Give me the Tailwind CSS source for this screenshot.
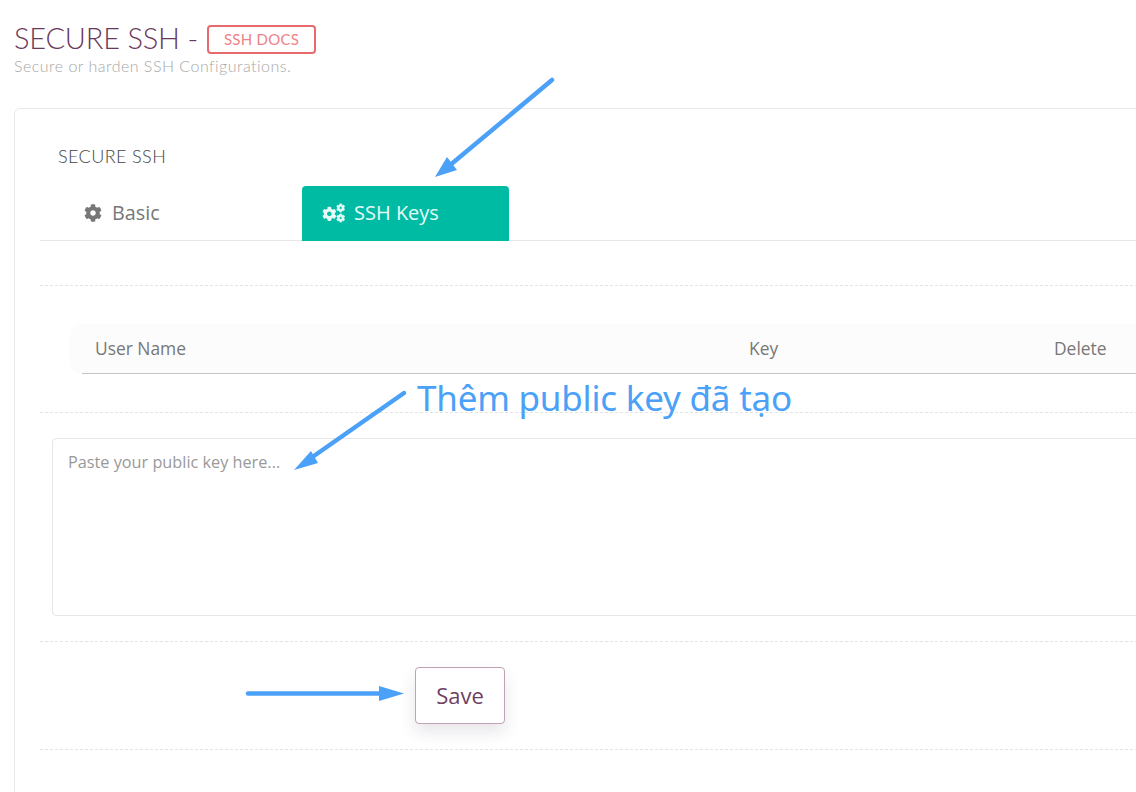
<!DOCTYPE html>
<html>
<head>
<meta charset="utf-8">
<script src="https://cdn.jsdelivr.net/npm/@tailwindcss/browser@4"></script>
</head>
<body class="bg-white">
<div class="relative w-[1136px] h-[792px] overflow-hidden bg-white font-['Open_Sans',sans-serif]">
  <header class="pl-[14px] pt-[25px] h-[108px]">
    <div class="flex items-start h-[29px] gap-[9px]">
      <h1 class="w-[184px] font-['Lato',sans-serif] font-light text-[29px] leading-[25px] text-[#6a3a5c] tracking-[-0.2px] whitespace-nowrap">SECURE SSH -</h1>
      <a class="flex items-center justify-center w-[109px] h-[29px] border-2 border-[#e96a6c] rounded-[4px] font-['Lato',sans-serif] text-[15px] text-[#ee8385] tracking-[0.25px] whitespace-nowrap">SSH DOCS</a>
    </div>
    <p class="font-['Lato',sans-serif] font-light text-[16px] leading-[20px] mt-[2px] text-[#a8a8a8] tracking-[0.48px] whitespace-nowrap">Secure or harden SSH Configurations.</p>
  </header>

  <section class="ml-[14px] w-[1200px] h-[760px] border border-[#e9e9e9] rounded-[6px] pl-[25px]">
    <h2 class="pl-[18px] pt-[36px] h-[77px] font-['Lato',sans-serif] font-light text-[18px] leading-[22px] text-[#444] tracking-[0.4px] whitespace-nowrap">SECURE SSH</h2>

    <div class="flex h-[55px] border-b border-[#e6e6e6]">
      <div class="flex items-center w-[262px] pl-[44px] pb-[1px] gap-[10px] text-[#777] text-[19.8px]">
        <svg class="w-[18px] h-[18px]" viewBox="0 0 512 512" fill="#777"><path d="M487.4 315.7l-42.6-24.6c4.3-23.2 4.3-47 0-70.2l42.6-24.6c4.9-2.8 7.1-8.6 5.5-14-11.1-35.6-30-67.8-54.7-94.6-3.8-4.1-10-5.1-14.8-2.3L380.8 110c-17.9-15.4-38.5-27.3-60.8-35.1V25.8c0-5.6-3.9-10.5-9.4-11.7-36.7-8.2-74.3-7.8-109.2 0-5.5 1.2-9.4 6.1-9.4 11.7V75c-22.2 7.9-42.8 19.8-60.8 35.1L88.7 85.5c-4.9-2.8-11-1.9-14.8 2.3-24.7 26.7-43.6 58.9-54.7 94.6-1.7 5.4.6 11.2 5.5 14L67.3 221c-4.3 23.2-4.3 47 0 70.2l-42.6 24.6c-4.9 2.8-7.1 8.6-5.5 14 11.1 35.6 30 67.8 54.7 94.6 3.8 4.1 10 5.1 14.8 2.3l42.6-24.6c17.9 15.4 38.5 27.3 60.8 35.1v49.2c0 5.6 3.9 10.5 9.4 11.7 36.7 8.2 74.3 7.8 109.2 0 5.5-1.2 9.4-6.1 9.4-11.7v-49.2c22.2-7.9 42.8-19.8 60.8-35.1l42.6 24.6c4.9 2.8 11 1.9 14.8-2.3 24.7-26.7 43.6-58.9 54.7-94.6 1.5-5.5-.7-11.3-5.6-14.1zM256 336c-44.1 0-80-35.9-80-80s35.9-80 80-80 80 35.9 80 80-35.9 80-80 80z"/></svg>
        <span>Basic</span>
      </div>
      <div class="flex items-center w-[207px] h-[55px] pl-[20px] pb-[1px] gap-[9px] rounded-t-[4px] bg-[#00bba4] text-[#e6fbf8] text-[20px]">
        <svg class="w-[23px] h-[20px]" viewBox="0 0 640 512" fill="#e6fbf8">
          <g transform="translate(0 75) scale(.8)"><path d="M487.4 315.7l-42.6-24.6c4.3-23.2 4.3-47 0-70.2l42.6-24.6c4.9-2.8 7.1-8.6 5.5-14-11.1-35.6-30-67.8-54.7-94.6-3.8-4.1-10-5.1-14.8-2.3L380.8 110c-17.9-15.4-38.5-27.3-60.8-35.1V25.8c0-5.6-3.9-10.5-9.4-11.7-36.7-8.2-74.3-7.8-109.2 0-5.5 1.2-9.4 6.1-9.4 11.7V75c-22.2 7.9-42.8 19.8-60.8 35.1L88.7 85.5c-4.9-2.8-11-1.9-14.8 2.3-24.7 26.7-43.6 58.9-54.7 94.6-1.7 5.4.6 11.2 5.5 14L67.3 221c-4.3 23.2-4.3 47 0 70.2l-42.6 24.6c-4.9 2.8-7.1 8.6-5.5 14 11.1 35.6 30 67.8 54.7 94.6 3.8 4.1 10 5.1 14.8 2.3l42.6-24.6c17.9 15.4 38.5 27.3 60.8 35.1v49.2c0 5.6 3.9 10.5 9.4 11.7 36.7 8.2 74.3 7.8 109.2 0 5.5-1.2 9.4-6.1 9.4-11.7v-49.2c22.2-7.9 42.8-19.8 60.8-35.1l42.6 24.6c4.9 2.8 11 1.9 14.8-2.3 24.7-26.7 43.6-58.9 54.7-94.6 1.5-5.5-.7-11.3-5.6-14.1zM256 336c-44.1 0-80-35.9-80-80s35.9-80 80-80 80 35.9 80 80-35.9 80-80 80z"/></g>
          <g transform="translate(400 -5) scale(.47)"><path stroke="#e6fbf8" stroke-width="30" d="M487.4 315.7l-42.6-24.6c4.3-23.2 4.3-47 0-70.2l42.6-24.6c4.9-2.8 7.1-8.6 5.5-14-11.1-35.6-30-67.8-54.7-94.6-3.8-4.1-10-5.1-14.8-2.3L380.8 110c-17.9-15.4-38.5-27.3-60.8-35.1V25.8c0-5.6-3.9-10.5-9.4-11.7-36.7-8.2-74.3-7.8-109.2 0-5.5 1.2-9.4 6.1-9.4 11.7V75c-22.2 7.9-42.8 19.8-60.8 35.1L88.7 85.5c-4.9-2.8-11-1.9-14.8 2.3-24.7 26.7-43.6 58.9-54.7 94.6-1.7 5.4.6 11.2 5.5 14L67.3 221c-4.3 23.2-4.3 47 0 70.2l-42.6 24.6c-4.9 2.8-7.1 8.6-5.5 14 11.1 35.6 30 67.8 54.7 94.6 3.8 4.1 10 5.1 14.8 2.3l42.6-24.6c17.9 15.4 38.5 27.3 60.8 35.1v49.2c0 5.6 3.9 10.5 9.4 11.7 36.7 8.2 74.3 7.8 109.2 0 5.5-1.2 9.4-6.1 9.4-11.7v-49.2c22.2-7.9 42.8-19.8 60.8-35.1l42.6 24.6c4.9 2.8 11 1.9 14.8-2.3 24.7-26.7 43.6-58.9 54.7-94.6 1.5-5.5-.7-11.3-5.6-14.1zM256 336c-44.1 0-80-35.9-80-80s35.9-80 80-80 80 35.9 80 80-35.9 80-80 80z"/></g>
          <g transform="translate(400 275) scale(.47)"><path stroke="#e6fbf8" stroke-width="30" d="M487.4 315.7l-42.6-24.6c4.3-23.2 4.3-47 0-70.2l42.6-24.6c4.9-2.8 7.1-8.6 5.5-14-11.1-35.6-30-67.8-54.7-94.6-3.8-4.1-10-5.1-14.8-2.3L380.8 110c-17.9-15.4-38.5-27.3-60.8-35.1V25.8c0-5.6-3.9-10.5-9.4-11.7-36.7-8.2-74.3-7.8-109.2 0-5.5 1.2-9.4 6.1-9.4 11.7V75c-22.2 7.9-42.8 19.8-60.8 35.1L88.7 85.5c-4.9-2.8-11-1.9-14.8 2.3-24.7 26.7-43.6 58.9-54.7 94.6-1.7 5.4.6 11.2 5.5 14L67.3 221c-4.3 23.2-4.3 47 0 70.2l-42.6 24.6c-4.9 2.8-7.1 8.6-5.5 14 11.1 35.6 30 67.8 54.7 94.6 3.8 4.1 10 5.1 14.8 2.3l42.6-24.6c17.9 15.4 38.5 27.3 60.8 35.1v49.2c0 5.6 3.9 10.5 9.4 11.7 36.7 8.2 74.3 7.8 109.2 0 5.5-1.2 9.4-6.1 9.4-11.7v-49.2c22.2-7.9 42.8-19.8 60.8-35.1l42.6 24.6c4.9 2.8 11 1.9 14.8-2.3 24.7-26.7 43.6-58.9 54.7-94.6 1.5-5.5-.7-11.3-5.6-14.1zM256 336c-44.1 0-80-35.9-80-80s35.9-80 80-80 80 35.9 80 80-35.9 80-80 80z"/></g>
        </svg>
        <span>SSH Keys</span>
      </div>
    </div>

    <div class="h-[45px] border-b border-dashed border-[#e4e4e4]"></div>

    <div class="h-[127px] border-b border-dashed border-[#e4e4e4] pt-[38px]">
      <div class="ml-[30px] w-[1066px] h-[50px] bg-[#fcfcfc] rounded-l-[10px] pl-[12px]">
        <div class="relative h-[50px] border-b border-[#c4c4c4] text-[17.4px] text-[#777]">
          <span class="absolute left-[13px] top-[11px] whitespace-nowrap">User Name</span>
          <span class="absolute left-[667px] top-[11px]">Key</span>
          <span class="absolute left-[972px] top-[11px]">Delete</span>
        </div>
      </div>
    </div>

    <div class="h-[229px] border-b border-dashed border-[#e4e4e4] pt-[25px]">
      <div class="ml-[12px] w-[1160px] h-[178px] border border-[#e6e6e6] rounded-[4px] pl-[15px] pt-[11px] text-[16.25px] leading-[24px] text-[#999]">Paste your public key here...</div>
    </div>

    <div class="h-[108px] border-b border-dashed border-[#e4e4e4] pt-[25px] pl-[375px]">
      <button class="w-[90px] h-[57px] border border-[#bfa3b5] rounded-[4px] bg-white text-[#6f3f62] text-[22px] shadow-[0_8px_16px_rgba(60,60,90,0.12)]">Save</button>
    </div>
  </section>

  <svg class="absolute left-0 top-0 pointer-events-none" width="1136" height="792" viewBox="0 0 1136 792" fill="#4aa1f7" stroke="none">
    <path d="M552 80L449 166" stroke="#4aa1f7" stroke-width="4.5" stroke-linecap="round"/>
    <path d="M435 177L447 157L457 170Z"/>
    <path d="M404 393L311 458" stroke="#4aa1f7" stroke-width="4.5" stroke-linecap="round"/>
    <path d="M294 470L311 451L318 463Z"/>
    <path d="M248 693.5H384" stroke="#4aa1f7" stroke-width="4.5" stroke-linecap="round"/>
    <path d="M404 693.5L379 686V701Z"/>
  </svg>
  <span class="absolute left-[417px] top-[373px] font-['Noto_Sans',sans-serif] text-[35px] leading-[50px] tracking-[-0.22px] text-[#4aa1f7] whitespace-nowrap">Thêm public key đã tạo</span>
</div>
</body>
</html>
